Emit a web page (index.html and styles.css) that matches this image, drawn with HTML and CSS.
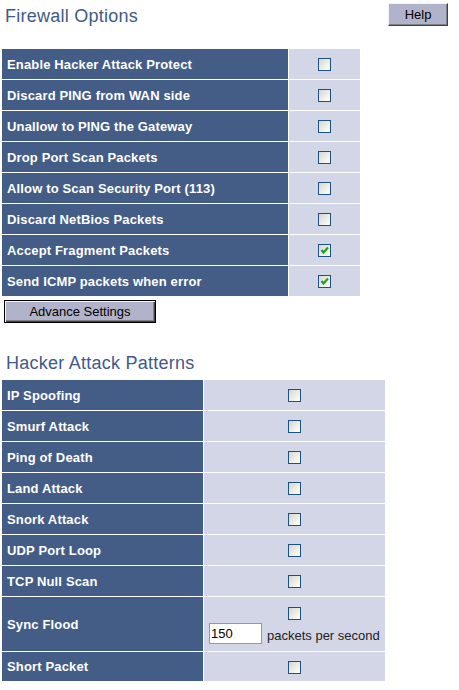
FILE: index.html
```html
<!DOCTYPE html>
<html>
<head>
<meta charset="utf-8">
<link rel="stylesheet" href="styles.css">
</head>
<body>
<div class="page">
  <div class="top">
    <h1 class="title">Firewall Options</h1>
    <button class="btn help">Help</button>
  </div>
  <table class="grid t1">
    <tr><td class="lbl">Enable Hacker Attack Protect</td><td class="val"><span class="cb"></span></td></tr>
    <tr><td class="lbl">Discard PING from WAN side</td><td class="val"><span class="cb"></span></td></tr>
    <tr><td class="lbl">Unallow to PING the Gateway</td><td class="val"><span class="cb"></span></td></tr>
    <tr><td class="lbl">Drop Port Scan Packets</td><td class="val"><span class="cb"></span></td></tr>
    <tr><td class="lbl">Allow to Scan Security Port (113)</td><td class="val"><span class="cb"></span></td></tr>
    <tr><td class="lbl">Discard NetBios Packets</td><td class="val"><span class="cb"></span></td></tr>
    <tr><td class="lbl">Accept Fragment Packets</td><td class="val"><span class="cb"><svg viewBox="0 0 11 11" width="11" height="11"><polyline points="2.5,5 4.5,7.5 9,2.5" fill="none" stroke="#21a121" stroke-width="2.2"/></svg></span></td></tr>
    <tr><td class="lbl">Send ICMP packets when error</td><td class="val"><span class="cb"><svg viewBox="0 0 11 11" width="11" height="11"><polyline points="2.5,5 4.5,7.5 9,2.5" fill="none" stroke="#21a121" stroke-width="2.2"/></svg></span></td></tr>
  </table>
  <button class="btn adv">Advance Settings</button>
  <h2 class="title sub">Hacker Attack Patterns</h2>
  <table class="grid t2">
    <tr><td class="lbl">IP Spoofing</td><td class="val"><span class="cb"></span></td></tr>
    <tr><td class="lbl">Smurf Attack</td><td class="val"><span class="cb"></span></td></tr>
    <tr><td class="lbl">Ping of Death</td><td class="val"><span class="cb"></span></td></tr>
    <tr><td class="lbl">Land Attack</td><td class="val"><span class="cb"></span></td></tr>
    <tr><td class="lbl">Snork Attack</td><td class="val"><span class="cb"></span></td></tr>
    <tr><td class="lbl">UDP Port Loop</td><td class="val"><span class="cb"></span></td></tr>
    <tr><td class="lbl">TCP Null Scan</td><td class="val"><span class="cb"></span></td></tr>
    <tr class="tall"><td class="lbl">Sync Flood</td><td class="val sync">
      <div class="syncbox">
        <span class="cb"></span>
        <div class="rate"><input class="num" type="text" value="150"><span class="unit">packets per second</span></div>
      </div>
    </td></tr>
    <tr class="last"><td class="lbl">Short Packet</td><td class="val"><span class="cb"></span></td></tr>
  </table>
</div>
</body>
</html>
```
FILE: styles.css
```css
html, body {
  margin: 0;
  padding: 0;
  background: #fff;
}
.page {
  font-family: "Liberation Sans", Arial, sans-serif;
  width: 459px;
}
.top {
  height: 48px;
  display: flex;
  justify-content: space-between;
  align-items: flex-start;
}
.title {
  margin: 5px 0 0 5px;
  font-size: 18px;
  line-height: 22px;
  font-weight: normal;
  letter-spacing: 0.25px;
  color: #3e5a8b;
}
.btn {
  font-family: "Liberation Sans", Arial, sans-serif;
  font-size: 13px;
  color: #000;
  background: #b0b3ca;
  border: 1px solid;
  border-color: #f4f4f8 #404040 #404040 #f4f4f8;
  box-shadow: inset -1px -1px 0 #80808a;
  padding: 0;
  display: block;
}
.help {
  margin: 3px 11px 0 0;
  width: 60px;
  height: 23px;
}
.adv {
  margin: 3px 0 0 4px;
  width: 152px;
  height: 23px;
  border-color: #000;
  box-shadow: inset 1px 1px 0 #f4f4f8, inset -1px -1px 0 #404040, inset -2px -2px 0 #80808a;
}
.sub {
  margin: 29px 0 0 6px;
}
.grid {
  border-collapse: separate;
  border-spacing: 1px;
  margin-left: 1px;
}
.t2 {
  margin-top: 5px;
}
.grid td {
  height: 30px;
  padding: 0;
  box-sizing: border-box;
}
.lbl {
  background: #445d87;
  color: #fff;
  font-weight: bold;
  font-size: 13px;
  letter-spacing: 0.15px;
  padding-left: 5px !important;
  text-align: left;
}
.val {
  background: #d3d6e7;
  text-align: center;
  vertical-align: middle;
}
.t1 .lbl { width: 286px; }
.t1 .val { width: 71px; }
.t2 .lbl { width: 201px; }
.t2 .val { width: 181px; }
.grid .tall td { height: 54px; }
.grid .last td { height: 29px; }
.cb {
  display: inline-block;
  vertical-align: middle;
  width: 13px;
  height: 13px;
  box-sizing: border-box;
  border: 1px solid #1c5180;
  background: linear-gradient(135deg, #d6d6cf 0%, #f4f4f0 70%, #fdfdfb 100%);
  line-height: 0;
}
.cb svg { display: block; }
.syncbox {
  display: flex;
  flex-direction: column;
  align-items: center;
  gap: 3px;
  padding-top: 3px;
}
.syncbox .cb { display: block; }
.rate {
  display: flex;
  align-items: center;
  align-self: flex-start;
  margin-left: 5px;
}
.num {
  width: 53px;
  height: 21px;
  box-sizing: border-box;
  border: 1px solid #7f9db9;
  padding: 0 1px;
  margin: 0;
  font-family: "Liberation Sans", Arial, sans-serif;
  font-size: 13px;
  color: #000;
  background: #fff;
}
.unit {
  margin-left: 5px;
  font-size: 13px;
  color: #222;
  padding-top: 4px;
}
```
